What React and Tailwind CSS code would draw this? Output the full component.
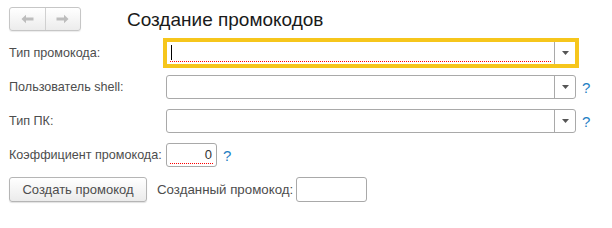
import React from 'react'

function Help() {
  return <span className="ml-[6px] text-[15px] leading-none text-[#1f7fc4]">?</span>
}

function Underline({ cursor, children, right }) {
  return (
    <div className="flex-1 flex flex-col justify-end px-[3px] pb-[2px] min-w-0">
      <div className={`h-[17px] flex items-center ${right ? 'justify-end pr-[1px]' : 'pl-[1px]'}`}>
        {cursor && <div className="w-px h-[15px] bg-black" />}
        {children}
      </div>
      <div className="h-px bg-[repeating-linear-gradient(90deg,#ff0000_0px,#ff0000_1px,#ffffff_1px,#ffffff_2px)]" />
    </div>
  )
}

function DropField({ focused, children }) {
  return (
    <div
      className={`flex h-6 w-[410px] bg-white border rounded-[3px] ${
        focused ? 'outline-[3px] outline-solid outline-[#f6c61c] border-[#f6c61c] rounded-none' : 'border-[#a9a9a9]'
      }`}
    >
      {children || <div className="flex-1" />}
      <div className="w-[21px] border-l border-[#a9a9a9] flex items-center justify-center">
        <svg width="7" height="4" viewBox="0 0 7 4">
          <path d="M0 0h7L3.5 4z" fill="#555" />
        </svg>
      </div>
    </div>
  )
}

function Row({ label, children }) {
  return (
    <div className="flex items-center h-6">
      <div className="w-[157px] shrink-0 whitespace-nowrap text-[12.6px] text-[#4d4d4d]">{label}</div>
      {children}
    </div>
  )
}

export default function App() {
  return (
    <div className="w-[612px] h-[228px] bg-white pl-[9px] pt-[7px] flex flex-col gap-[10px] font-['Liberation_Sans',Arial,sans-serif]">
      <div className="flex items-center h-6">
        <div className="flex h-6 w-[72px] rounded-[3px] border border-[#c6c6c6] bg-gradient-to-b from-white to-[#ececec] shadow-[0_1px_1px_rgba(0,0,0,0.08)]">
          <div className="flex-1 flex items-center justify-center border-r border-[#d0d0d0]">
            <svg width="13" height="10" viewBox="0 0 13 10">
              <path d="M0.5 5L5 0.8V3.6H12.5V6.4H5V9.2Z" fill="#bdbdbd" />
            </svg>
          </div>
          <div className="flex-1 flex items-center justify-center">
            <svg width="13" height="10" viewBox="0 0 13 10">
              <path d="M12.5 5L8 0.8V3.6H0.5V6.4H8V9.2Z" fill="#bdbdbd" />
            </svg>
          </div>
        </div>
        <div className="ml-[46px] text-[19px] text-[#1a1a1a] leading-none">Создание промокодов</div>
      </div>

      <Row label="Тип промокода:">
        <DropField focused>
          <Underline cursor />
        </DropField>
      </Row>

      <Row label="Пользователь shell:">
        <div className="flex items-center">
          <DropField />
          <Help />
        </div>
      </Row>

      <Row label="Тип ПК:">
        <div className="flex items-center">
          <DropField />
          <Help />
        </div>
      </Row>

      <Row label="Коэффициент промокода:">
        <div className="flex items-center">
          <div className="flex h-6 w-[51px] bg-white border border-[#a9a9a9] rounded-[3px]">
            <Underline right>
              <span className="text-[13px] text-[#333]">0</span>
            </Underline>
          </div>
          <Help />
        </div>
      </Row>

      <div className="flex items-center h-[25px]">
        <button className="h-[25px] w-[138px] rounded-[3px] border border-[#b5b5b5] bg-gradient-to-b from-white to-[#ebebeb] text-[13px] text-[#4d4d4d] shadow-[0_1px_1px_rgba(0,0,0,0.12)]">
          Создать промокод
        </button>
        <span className="ml-[10px] text-[13.3px] text-[#4d4d4d]">Созданный промокод:</span>
        <div className="ml-[3px] h-[25px] w-[71px] bg-white border border-[#a9a9a9] rounded-[3px]" />
      </div>
    </div>
  )
}
